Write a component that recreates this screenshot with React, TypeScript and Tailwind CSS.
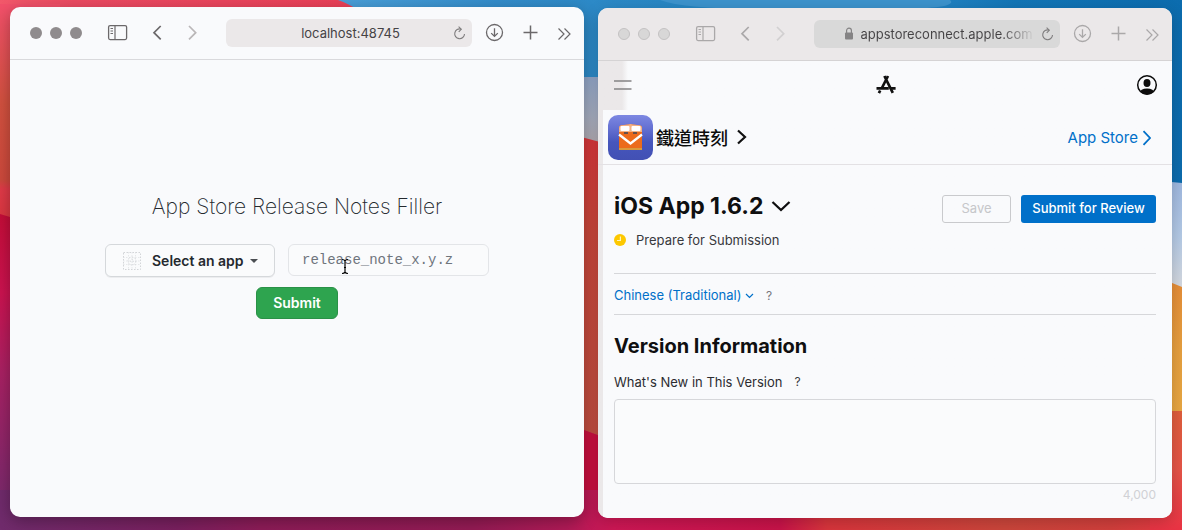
import type { ReactNode } from "react";

function Wallpaper() {
  return (
    <svg
      className="absolute inset-0 h-full w-full"
      viewBox="0 0 1182 530"
      preserveAspectRatio="none"
      aria-hidden="true"
    >
      <defs>
        <linearGradient id="redLeft" x1="0" y1="0" x2="0" y2="1">
          <stop offset="0" stopColor="#f2506a" />
          <stop offset="0.45" stopColor="#d2513f" />
          <stop offset="0.8" stopColor="#cd493c" />
          <stop offset="0.84" stopColor="#e03a48" />
          <stop offset="1" stopColor="#d8363f" />
        </linearGradient>
        <linearGradient id="crimsonLeft" x1="0" y1="0" x2="0" y2="1">
          <stop offset="0" stopColor="#c40d38" />
          <stop offset="0.25" stopColor="#cb1350" />
          <stop offset="0.5" stopColor="#a92163" />
          <stop offset="0.8" stopColor="#86276a" />
          <stop offset="1" stopColor="#702b6c" />
        </linearGradient>
        <linearGradient id="redTop" x1="0" y1="0" x2="1" y2="0">
          <stop offset="0" stopColor="#f2586a" />
          <stop offset="0.2" stopColor="#ec4a62" />
          <stop offset="1" stopColor="#ea4058" />
        </linearGradient>
        <linearGradient id="blue" x1="0" y1="0" x2="1" y2="0">
          <stop offset="0.28" stopColor="#4ba0d9" />
          <stop offset="0.42" stopColor="#348dcb" />
          <stop offset="0.58" stopColor="#2686c3" />
          <stop offset="0.78" stopColor="#2484c4" />
          <stop offset="0.86" stopColor="#1275b6" />
          <stop offset="1" stopColor="#0c6cae" />
        </linearGradient>
        <linearGradient id="mist" x1="0" y1="0" x2="0" y2="1">
          <stop offset="0" stopColor="#92a6c8" />
          <stop offset="0.5" stopColor="#a7aec0" />
          <stop offset="1" stopColor="#b7a9a8" />
        </linearGradient>
        <linearGradient id="mistRight" x1="0" y1="0" x2="0" y2="1">
          <stop offset="0" stopColor="#9fb8e0" />
          <stop offset="0.5" stopColor="#b4cae6" />
          <stop offset="1" stopColor="#d9dbdf" />
        </linearGradient>
        <linearGradient id="redMid" x1="0" y1="0" x2="0" y2="1">
          <stop offset="0" stopColor="#d8363b" />
          <stop offset="0.3" stopColor="#c9473b" />
          <stop offset="1" stopColor="#c14f41" />
        </linearGradient>
        <linearGradient id="orange" x1="0" y1="0" x2="0" y2="1">
          <stop offset="0" stopColor="#e68b37" />
          <stop offset="0.5" stopColor="#e7a03f" />
          <stop offset="1" stopColor="#e9a943" />
        </linearGradient>
        <linearGradient id="redRight" x1="0" y1="0" x2="0" y2="1">
          <stop offset="0" stopColor="#df5e3c" />
          <stop offset="0.5" stopColor="#e65448" />
          <stop offset="1" stopColor="#e93344" />
        </linearGradient>
        <linearGradient id="bottom" x1="0" y1="0" x2="1" y2="0">
          <stop offset="0" stopColor="#702b6c" />
          <stop offset="0.15" stopColor="#7a205f" />
          <stop offset="0.22" stopColor="#8d1c58" />
          <stop offset="0.4" stopColor="#941b54" />
          <stop offset="0.48" stopColor="#b11a57" />
          <stop offset="0.52" stopColor="#ce1755" />
          <stop offset="0.66" stopColor="#c81349" />
          <stop offset="0.7" stopColor="#d9353c" />
          <stop offset="0.85" stopColor="#cc463b" />
          <stop offset="0.94" stopColor="#d23f3c" />
          <stop offset="1" stopColor="#e83742" />
        </linearGradient>
      </defs>
      <rect width="1182" height="530" fill="url(#blue)" />
      <path d="M660 0q25 10 120 9h110q70 0 60-9z" fill="#3c93cd" />
      <path d="M0 0h338q10 3 30 16L300 60H0z" fill="url(#redTop)" />
      <rect y="4" width="60" height="220" fill="url(#redLeft)" />
      <path d="M0 214l30 9v307H0z" fill="url(#crimsonLeft)" />
      <path d="M570 77h60v80h-60z" fill="url(#mist)" />
      <path d="M570 134l60 16v310h-60z" fill="url(#redMid)" />
      <path d="M0 490l560 6 10-71 60 22v50h552v33H0z" fill="url(#bottom)" />
      <path d="M570 425l60 22v43h-60z" fill="#c9103f" />
      <path d="M1150 180l32 3v110h-32z" fill="url(#mistRight)" />
      <path d="M1150 274l32 13v140h-32z" fill="url(#orange)" />
      <path d="M1150 411h32v119h-32z" fill="url(#redRight)" />
    </svg>
  );
}

function Toolbar({ active, address }: { active: boolean; address: ReactNode }) {
  const dot = active
    ? "size-3 rounded-full bg-[#8f8b8d]"
    : "size-3 rounded-full border border-[#c4c2c3] bg-[#d8d7d7]";
  return (
    <header
      className={
        active
          ? "flex h-[53px] shrink-0 items-center border-b border-[#d9d9dc] pr-3 pl-5 text-[#6b686a]"
          : "flex h-[53px] shrink-0 items-center border-b border-[#d5d3d4] bg-[#ebe8e9] pr-3 pl-5 text-[#aaa8a9]"
      }
    >
      <div className="flex gap-2">
        <span className={dot} />
        <span className={dot} />
        <span className={dot} />
      </div>
      <button type="button" aria-label="Sidebar" className="ml-6 flex">
        <svg width="22" height="18" viewBox="0 0 22 18" fill="none" stroke="currentColor">
          <rect x="2.600" y="1.600" width="18" height="14" rx="1.500" strokeWidth="1.300" />
          <path d="M9 2v14" strokeWidth="1.200" />
          <path d="M4.500 4.500h2.500M4.500 7h2.500M4.500 9.500h2.500" strokeWidth="1" />
        </svg>
      </button>
      <button type="button" aria-label="Back" className="ml-6 flex">
        <svg width="10" height="16" viewBox="0 0 10 16" fill="none" stroke="currentColor" strokeWidth="1.7">
          <path d="M8.7 1L2 7.7l6.7 6.7" />
        </svg>
      </button>
      <button
        type="button"
        aria-label="Forward"
        className={active ? "ml-[25px] flex text-[#bab7b8]" : "ml-[25px] flex text-[#d2d0d1]"}
      >
        <svg width="10" height="16" viewBox="0 0 10 16" fill="none" stroke="currentColor" strokeWidth="1.7">
          <path d="M2 1l6.7 6.7L2 14.4" />
        </svg>
      </button>
      <div
        className={
          active
            ? "ml-[29px] flex h-7 min-w-0 flex-1 items-center rounded-md bg-[#ebe8e9] px-1.5 text-[13px] text-[#454345]"
            : "ml-[29px] flex h-7 min-w-0 flex-1 items-center rounded-md bg-[#d9d9d9] px-1.5 text-[13px] text-[#454345]"
        }
      >
        <div className="flex min-w-0 flex-1 justify-center pt-0.5 pl-4">{address}</div>
        <button type="button" aria-label="Reload" className="flex text-[#7f7d7e]">
          <svg width="13" height="16" viewBox="0 0 13 16" fill="none" stroke="currentColor" strokeWidth="1.1">
            <path d="M8 4.1A4.9 4.9 0 1 0 11.5 9" />
            <path d="M5.6 1.6L8.3 4.2 5.7 7" />
          </svg>
        </button>
      </div>
      <button type="button" aria-label="Downloads" className="ml-3 flex">
        <svg width="20" height="20" viewBox="0 0 20 20" fill="none" stroke="currentColor" strokeWidth="1.3">
          <circle cx="10.500" cy="9.500" r="8" />
          <path d="M10.500 5.300v8M7.200 10.100l3.300 3.300 3.300-3.300" />
        </svg>
      </button>
      <button type="button" aria-label="New tab" className="ml-4 flex">
        <svg width="20" height="20" viewBox="0 0 20 20" fill="none" stroke="currentColor" strokeWidth="1.5">
          <path d="M10.500 2.500v14M3.500 9.500h14" />
        </svg>
      </button>
      <button type="button" aria-label="More" className="ml-4 flex">
        <svg width="16" height="16" viewBox="0 0 16 16" fill="none" stroke="currentColor" strokeWidth="1.2">
          <path d="M2.500 3.500L8 9l-5.500 5.500M8.500 3.500L14 9l-5.500 5.500" />
        </svg>
      </button>
    </header>
  );
}

function FillerWindow() {
  return (
    <section className="mt-[7px] mb-[13px] flex min-w-0 flex-1 flex-col overflow-hidden rounded-[10px] bg-[#f9fafc] shadow-[0_4px_16px_rgba(0,0,0,0.3)]">
      <Toolbar active address={<span>localhost:48745</span>} />
      <main className="flex flex-1 flex-col items-center pt-[130px]">
        <h1 className="text-[21px] leading-[34px] font-extralight text-[#24292e]">
          App Store Release Notes Filler
        </h1>
        <form className="mt-5 flex flex-col items-center gap-2.5">
          <div className="flex items-start gap-[13px]">
            <div className="grid items-center">
              <select
                aria-label="App"
                className="col-start-1 row-start-1 h-[33px] w-[170px] appearance-none rounded-md border border-[#d5d8db] bg-[#fafbfc] pl-[46px] text-sm font-semibold text-[#24292e] shadow-[0_1px_0_rgba(27,31,35,0.06)]"
              >
                <option>Select an app</option>
              </select>
              <svg
                className="pointer-events-none col-start-1 row-start-1 ml-[17px]"
                width="20"
                height="20"
                viewBox="0 0 20 20"
                fill="none"
                stroke="#d3d5d8"
                strokeDasharray="1.500 1.500"
              >
                <rect x="1.500" y="1.500" width="17" height="17" />
                <path d="M6.500 1v18M13.500 1v18M1 6.500h18M1 13.500h18M10 1v18M1 10h18" strokeWidth="0.5" />
                <circle cx="10" cy="10" r="4" strokeWidth="0.8" />
                <circle cx="10" cy="10" r="1.500" strokeWidth="0.8" />
              </svg>
              <svg
                className="pointer-events-none col-start-1 row-start-1 mr-[17px] justify-self-end"
                width="8"
                height="4"
                viewBox="0 0 8 4"
                fill="#4a4e52"
              >
                <path d="M0 0h8L4 4z" />
              </svg>
            </div>
            <div className="relative">
              <input
                type="text"
                aria-label="Release note file"
                placeholder="release_note_x.y.z"
                className="block h-8 w-[201px] rounded-md border border-[#e3e5e8] bg-[#fafbfc] px-[13px] font-['Liberation_Mono',monospace] text-sm leading-7 placeholder:overflow-visible placeholder:leading-7 placeholder:text-[#6f757c]"
              />
              <svg
                className="pointer-events-none absolute top-3.5 left-[53px]"
                width="8"
                height="17"
                viewBox="0 0 8 17"
                fill="none"
                stroke="#000"
                strokeWidth="1.200"
              >
                <path d="M1 1.500q2.500 0 3 1.500Q4.500 1.500 7 1.500M4 3v11M1 15.500q2.500 0 3-1.500q.5 1.500 3 1.500M3 9.500h2" />
              </svg>
            </div>
          </div>
          <button
            type="button"
            className="h-8 rounded-md border border-[#2a9147] bg-[#2ea44f] px-4 text-sm font-semibold text-white"
          >
            Submit
          </button>
        </form>
      </main>
    </section>
  );
}

function AppIcon() {
  return (
    <svg width="45" height="45" viewBox="0 0 45 45" aria-hidden="true">
      <defs>
        <linearGradient id="tile" x1="0" y1="0" x2="0" y2="1">
          <stop offset="0" stopColor="#7d88e2" />
          <stop offset="0.3" stopColor="#6470d2" />
          <stop offset="0.6" stopColor="#4656bd" />
          <stop offset="1" stopColor="#4250b4" />
        </linearGradient>
      </defs>
      <rect width="45" height="45" rx="10" fill="url(#tile)" />
      <path d="M11 35V13q0-2.500 2.500-2.800l7-.7q2-1 4 0l7 .7Q34 10.500 34 13v22z" fill="#ec6b1c" />
      <path d="M11 17v-4q0-2.500 2.500-2.800l7-.7q2-1 4 0l7 .7Q34 10.500 34 13v4z" fill="#f3b184" />
      <rect x="12.500" y="11" width="9" height="5" rx="1" fill="#fff" />
      <rect x="23.500" y="11" width="9" height="5" rx="1" fill="#fff" />
      <path d="M11 19.500l11.500 9 11.500-9" fill="none" stroke="#fff" strokeWidth="2.300" />
      <path d="M16 17h4v2h-4zM25 17h4v2h-4z" fill="#68504c" />
      <path d="M11 33h23v2H11z" fill="#d99a3c" />
    </svg>
  );
}

function HelpMark({ label, tone }: { label: string; tone: "light" | "dark" }) {
  return (
    <button
      type="button"
      aria-label={label}
      className={tone === "light" ? "text-xs text-[#77777c]" : "text-xs text-[#3a3a3e]"}
    >
      ?
    </button>
  );
}

function ConnectWindow() {
  return (
    <section className="mt-2 mb-3 flex min-w-0 flex-1 flex-col overflow-hidden rounded-[10px] bg-[#f9fafc] shadow-[0_4px_16px_rgba(0,0,0,0.2)]">
      <Toolbar
        active={false}
        address={
          <>
            <svg className="mt-0.5 mr-1.5 ml-1 shrink-0" width="10" height="13" viewBox="0 0 10 13" aria-hidden="true">
              <rect x="1" y="5.500" width="8" height="7" rx="1" fill="#858485" />
              <path d="M2.600 6V3.500a2.400 2.400 0 0 1 4.800 0V6" fill="none" stroke="#858485" strokeWidth="1.200" />
            </svg>
            <span className="mr-1 bg-linear-to-r from-[#454345] from-82% to-[#d0d0d0] bg-clip-text whitespace-nowrap text-transparent">
              appstoreconnect.apple.com
            </span>
          </>
        }
      />
      <div className="flex flex-1 flex-col bg-linear-to-r from-[#ebe8e9] from-[5px] to-[#f9fafc] to-[5px]">
        <nav className="flex h-[49px] items-center justify-between bg-linear-to-r from-[#ebe8e9] from-[24px] to-[#f9fafc] to-[30px] pr-[14px] pb-0.5 pl-4">
          <button type="button" aria-label="Menu" className="flex w-[22px]">
            <svg width="18" height="12" viewBox="0 0 18 12" stroke="#848284" strokeWidth="1.600">
              <path d="M0 2h17.500M0 10h17.500" />
            </svg>
          </button>
          <a href="#home" aria-label="App Store Connect" className="flex">
            <svg width="20" height="20" viewBox="0 0 20 20" fill="none" stroke="#111" strokeWidth="2.700">
              <path d="M8.400 1l8.400 16.800M12 1L5.900 13M4.200 15.500l-1.300 2.600" />
              <path d="M.5 13.400h12.300M14.800 13.400h4.800" />
            </svg>
          </a>
          <button type="button" aria-label="Account" className="flex">
            <svg width="22" height="22" viewBox="0 0 22 22">
              <defs>
                <clipPath id="avatar">
                  <circle cx="11" cy="11" r="9.500" />
                </clipPath>
              </defs>
              <circle cx="11" cy="11" r="9.300" fill="none" stroke="#0c0c0c" strokeWidth="1.500" />
              <g clipPath="url(#avatar)" fill="#0c0c0c">
                <ellipse cx="11" cy="9" rx="3.500" ry="4" />
                <ellipse cx="11" cy="19" rx="7.500" ry="4.500" />
              </g>
            </svg>
          </button>
        </nav>
        <div className="flex h-[55px] items-center border-b border-[#e3e1e4] pr-5 pl-2.5">
          <a href="#app" className="flex items-center">
            <AppIcon />
            <span className="ml-[3px] font-['Noto_Sans_CJK_TC',sans-serif] text-lg leading-6 font-medium text-[#0c0c0c]">
              鐵道時刻
            </span>
            <svg className="ml-2" width="12" height="16" viewBox="0 0 12 16" fill="none" stroke="#111" strokeWidth="2.200">
              <path d="M2 1.500L9 8l-7 6.500" />
            </svg>
          </a>
          <a href="#store" className="ml-auto flex items-center pt-0.5 text-[15px] text-[#0070c9]">
            App Store
            <svg className="ml-1" width="10" height="16" viewBox="0 0 10 16" fill="none" stroke="currentColor" strokeWidth="1.800">
              <path d="M1.500 1.200L8 8l-6.500 6.800" />
            </svg>
          </a>
        </div>
        <main className="flex flex-1 flex-col px-4 pt-6">
          <div className="flex items-center">
            <h1 className="text-[23px] leading-8 font-bold text-[#0f0f10]">
              <button type="button" className="flex items-center gap-2">
                iOS App 1.6.2
                <svg width="20" height="12" viewBox="0 0 20 12" fill="none" stroke="currentColor" strokeWidth="2.300">
                  <path d="M1.500 2l8.500 8 8.500-8" />
                </svg>
              </button>
            </h1>
            <div className="ml-auto flex gap-2.5 pt-1.5 text-[13px]">
              <button
                type="button"
                disabled
                className="h-7 w-[69px] rounded-[3px] border border-[#c9cacd] text-[#c6c7ca]"
              >
                Save
              </button>
              <button type="button" className="h-7 w-[135px] rounded-[3px] bg-[#0070c9] font-medium text-white">
                Submit for Review
              </button>
            </div>
          </div>
          <p className="mt-[7px] flex items-center gap-2.5 text-[13px] leading-5 text-[#38383c]">
            <svg width="12" height="12" viewBox="0 0 12 12" aria-hidden="true">
              <circle cx="6" cy="6" r="6" fill="#fdc800" />
              <path d="M6.400 2.500v4H3" fill="none" stroke="#fff3b8" strokeWidth="1.200" />
            </svg>
            Prepare for Submission
          </p>
          <div className="mt-[23px] flex h-[42px] items-center gap-3 border-y border-[#d6d7da] pt-1">
            <div className="grid items-center text-[#0070c9]">
              <select
                aria-label="Language"
                className="col-start-1 row-start-1 appearance-none pr-3 text-[13px] text-[#0070c9]"
              >
                <option>Chinese (Traditional)</option>
              </select>
              <svg
                className="pointer-events-none col-start-1 row-start-1 justify-self-end"
                width="9"
                height="6"
                viewBox="0 0 9 6"
                fill="none"
                stroke="currentColor"
                strokeWidth="1.200"
              >
                <path d="M1 1l3.500 3.500L8 1" />
              </svg>
            </div>
            <HelpMark label="About languages" tone="light" />
          </div>
          <h2 className="mt-[17px] text-xl leading-7 font-bold text-[#0f0f10]">Version Information</h2>
          <div className="mt-3 flex items-center gap-3 text-[13px] leading-5 text-[#2c2c30]">
            <label htmlFor="whats-new">What's New in This Version</label>
            <HelpMark label="About release notes" tone="dark" />
          </div>
          <textarea
            id="whats-new"
            className="mt-[7px] block h-[85px] w-full resize-none rounded-sm border border-[#d6d7da] bg-[#fafbfc] p-2 text-[13px]"
          />
          <p className="mt-0.5 text-right text-xs leading-[18px] text-[#d0d1d5]">4,000</p>
        </main>
      </div>
    </section>
  );
}

export default function App() {
  return (
    <div className="relative min-h-screen font-['Inter','Noto_Sans_CJK_TC',sans-serif]">
      <Wallpaper />
      <div className="relative flex min-h-screen gap-[14px] px-2.5">
        <FillerWindow />
        <ConnectWindow />
      </div>
    </div>
  );
}
